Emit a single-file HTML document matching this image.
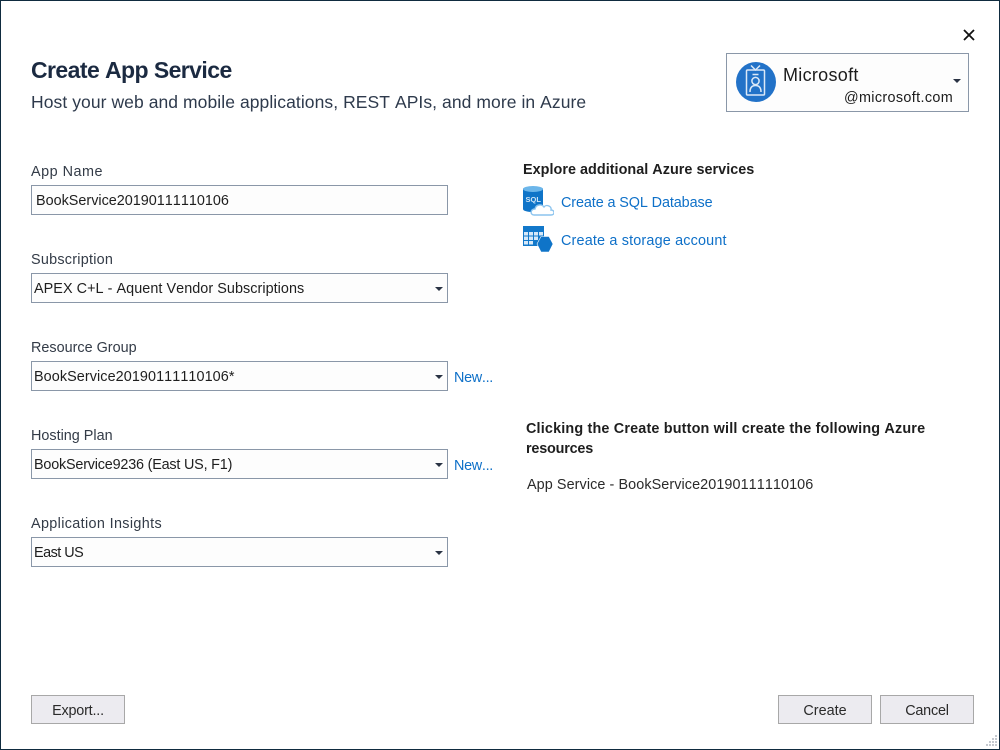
<!DOCTYPE html>
<html lang="en"><head><meta charset="utf-8"><title>Create App Service</title>
<style>
html,body{margin:0;padding:0;background:#fff}
#w{position:relative;width:1000px;height:750px;overflow:hidden;background:#fff;font-family:"Liberation Sans",sans-serif;font-size:14.4px;color:#1e1e1e;font-kerning:none}
#w:before{content:"";position:absolute;left:0;top:0;right:0;bottom:0;border:1px solid #0f2b3f;z-index:5;pointer-events:none}
.t{position:absolute;white-space:nowrap;line-height:20px}
.f{position:absolute;left:31px;width:415px;height:28px;border:1px solid #8a97a8;background:#fdfdfd}
.a{position:absolute;width:0;height:0;border-left:4px solid transparent;border-right:4px solid transparent;border-top:4px solid #2a3344}
.b{position:absolute;top:695px;width:92px;height:27px;border:1px solid #a8a8a8;background:#ecebf0;text-align:center;line-height:30px;color:#2a2a2a}
.l{color:#0e70c8}
.g{color:#333b47}
</style></head><body><div id="w">
<svg style="position:absolute;left:963px;top:29px" width="12" height="12" viewBox="0 0 12 12"><path d="M1 1L11 11M11 1L1 11" stroke="#111" stroke-width="1.8"/></svg>

<div class="t" style="left:31px;top:56px;font-size:23px;line-height:28px;font-weight:bold;color:#1b2a41;letter-spacing:-.57px">Create App Service</div>
<div class="t" style="left:31px;top:91px;font-size:17.5px;line-height:22px;color:#2e3a4c;letter-spacing:.07px">Host your web and mobile applications, REST APIs, and more in Azure</div>

<div style="position:absolute;left:726px;top:53px;width:241px;height:57px;border:1px solid #8a97a8;background:#fdfdfd"></div>
<svg style="position:absolute;left:736px;top:62px" width="40" height="40" viewBox="0 0 40 40"><circle cx="20" cy="20" r="20" fill="#2272c8"/><g fill="none" stroke="#dbe8f7" stroke-width="1.5"><rect x="10.500" y="8" width="18" height="25" rx="1"/><path d="M15 3.500L19.500 8L24 3.500M16.500 12.500H22.500"/><circle cx="19.500" cy="19" r="3.600"/><path d="M14 30C14 25 16.500 23.500 19.500 23.500S25 25 25 30"/></g></svg>
<div class="t" style="left:783px;top:65px;font-size:18px;color:#1c1c1c;letter-spacing:.3px">Microsoft</div>
<div class="t" style="left:844px;top:88px;font-size:14.4px;color:#1c1c1c;letter-spacing:.35px">@microsoft.com</div>
<div class="a" style="left:953px;top:79px"></div>

<div class="t g" style="left:31px;top:162px;letter-spacing:.5px">App Name</div>
<div class="f" style="top:185px"></div>
<div class="t" style="left:36px;top:191px">BookService20190111110106</div>

<div class="t g" style="left:31px;top:250px;letter-spacing:.25px">Subscription</div>
<div class="f" style="top:273px"></div>
<div class="t" style="left:34px;top:279px;letter-spacing:.05px">APEX C+L - Aquent Vendor Subscriptions</div>
<div class="a" style="left:435px;top:287px"></div>

<div class="t g" style="left:31px;top:338px">Resource Group</div>
<div class="f" style="top:361px"></div>
<div class="t" style="left:34px;top:367px;letter-spacing:.08px">BookService20190111110106*</div>
<div class="a" style="left:435px;top:375px"></div>
<div class="t l" style="left:454px;top:368px;letter-spacing:-.3px">New...</div>

<div class="t g" style="left:31px;top:426px">Hosting Plan</div>
<div class="f" style="top:449px"></div>
<div class="t" style="left:34px;top:455px;letter-spacing:-.2px">BookService9236 (East US, F1)</div>
<div class="a" style="left:435px;top:463px"></div>
<div class="t l" style="left:454px;top:456px;letter-spacing:-.3px">New...</div>

<div class="t g" style="left:31px;top:514px;letter-spacing:.35px">Application Insights</div>
<div class="f" style="top:537px"></div>
<div class="t" style="left:34px;top:543px;letter-spacing:-.5px">East US</div>
<div class="a" style="left:435px;top:551px"></div>

<div class="t" style="left:523px;top:160px;font-weight:bold;letter-spacing:.03px">Explore additional Azure services</div>
<svg style="position:absolute;left:522px;top:185px" width="32" height="32" viewBox="0 0 32 32"><path d="M1 4C1 1 21 1 21 4V24C21 28 1 28 1 24Z" fill="#0f74c8"/><ellipse cx="11" cy="4" rx="10" ry="3" fill="#6cb6ea"/><text x="3.500" y="17" font-family="Liberation Sans,sans-serif" font-size="7.500" font-weight="bold" fill="#cfe5f7">SQL</text><path d="M12 30C8 30 8 24 13 24C14 19 20 19 22 22C24 19 30 21 29 25C33 25 33 30 29 30Z" fill="#fff" stroke="#8cc4ee" stroke-width="1.400"/></svg>
<svg style="position:absolute;left:522px;top:225px" width="32" height="28" viewBox="0 0 32 28"><rect x="1" y="1" width="21" height="20" fill="#1278ca"/><g fill="#d6e8f8"><rect x="2" y="7" width="4" height="3.500"/><rect x="7" y="7" width="4" height="3.500"/><rect x="12" y="7" width="4" height="3.500"/><rect x="17" y="7" width="4" height="3.500"/><rect x="2" y="11.500" width="4" height="3.500"/><rect x="7" y="11.500" width="4" height="3.500"/><rect x="12" y="11.500" width="4" height="3.500"/><rect x="2" y="16" width="4" height="3.500"/><rect x="7" y="16" width="4" height="3.500"/></g><path d="M19 11.500H27L31 19L27 27H19L15 19Z" fill="#0f74c8" stroke="#fff" stroke-width=".6"/></svg>
<div class="t l" style="left:561px;top:193px;letter-spacing:-.1px">Create a SQL Database</div>
<div class="t l" style="left:561px;top:231px;letter-spacing:.17px">Create a storage account</div>

<div class="t" style="left:526px;top:419px;font-weight:bold;letter-spacing:.17px">Clicking the Create button will create the following Azure</div>
<div class="t" style="left:526px;top:439px;font-weight:bold;letter-spacing:-.2px">resources</div>
<div class="t" style="left:527px;top:475px;color:#2a2a2a;letter-spacing:.08px">App Service - BookService20190111110106</div>

<div class="b" style="left:31px;letter-spacing:-.2px">Export...</div>
<div class="b" style="left:778px">Create</div>
<div class="b" style="left:880px;letter-spacing:-.2px">Cancel</div>

<svg style="position:absolute;left:984px;top:733px" width="15" height="15" viewBox="0 0 15 15" fill="#c5c9d0"><rect x="11" y="2" width="2" height="2"/><rect x="8" y="5" width="2" height="2"/><rect x="11" y="5" width="2" height="2"/><rect x="5" y="8" width="2" height="2"/><rect x="8" y="8" width="2" height="2"/><rect x="11" y="8" width="2" height="2"/><rect x="2" y="11" width="2" height="2"/><rect x="5" y="11" width="2" height="2"/><rect x="8" y="11" width="2" height="2"/><rect x="11" y="11" width="2" height="2"/></svg>
</div></body></html>
